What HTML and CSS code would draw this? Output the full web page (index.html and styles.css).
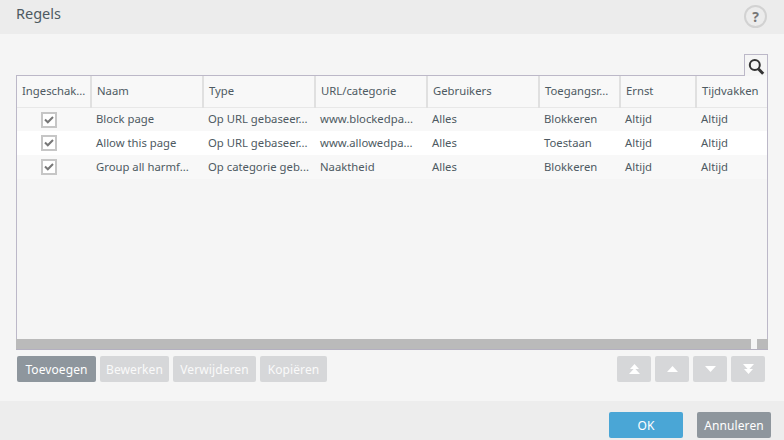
FILE: index.html
```html
<!DOCTYPE html>
<html lang="nl">
<head>
    <meta charset="UTF-8">
    <meta name="viewport" content="width=device-width, initial-scale=1.0">
    <title>Regels</title>
    <link rel="stylesheet" href="styles.css">
</head>
<body>
    <header class="top-bar">
        <h1 class="title">Regels</h1>
        <div class="help">?</div>
    </header>

    <main class="content">
        <div class="search-row">
            <div class="search-tab">
                <svg width="17" height="18" viewBox="0 0 17 18">
                    <circle cx="6.8" cy="7" r="5" fill="none" stroke="#333" stroke-width="2"/>
                    <path d="M10.5 11 L15.2 15.8" stroke="#333" stroke-width="3"/>
                </svg>
            </div>
        </div>

        <div class="grid-box">
            <table class="rules">
                <thead>
                    <tr>
                        <th class="col-on">Ingeschak...</th>
                        <th class="col-name">Naam</th>
                        <th class="col-type">Type</th>
                        <th class="col-url">URL/categorie</th>
                        <th class="col-users">Gebruikers</th>
                        <th class="col-access">Toegangsr...</th>
                        <th class="col-level">Ernst</th>
                        <th class="col-time">Tijdvakken</th>
                    </tr>
                </thead>
                <tbody>
                    <tr>
                        <td class="check-cell"><span class="check"><svg width="10" height="8" viewBox="0 0 10 8"><path d="M1 3.5 L3.8 6.3 L9 1" fill="none" stroke="#777" stroke-width="2"/></svg></span></td>
                        <td>Block page</td>
                        <td>Op URL gebaseer...</td>
                        <td>www.blockedpa...</td>
                        <td>Alles</td>
                        <td>Blokkeren</td>
                        <td>Altijd</td>
                        <td>Altijd</td>
                    </tr>
                    <tr>
                        <td class="check-cell"><span class="check"><svg width="10" height="8" viewBox="0 0 10 8"><path d="M1 3.5 L3.8 6.3 L9 1" fill="none" stroke="#777" stroke-width="2"/></svg></span></td>
                        <td>Allow this page</td>
                        <td>Op URL gebaseer...</td>
                        <td>www.allowedpa...</td>
                        <td>Alles</td>
                        <td>Toestaan</td>
                        <td>Altijd</td>
                        <td>Altijd</td>
                    </tr>
                    <tr>
                        <td class="check-cell"><span class="check"><svg width="10" height="8" viewBox="0 0 10 8"><path d="M1 3.5 L3.8 6.3 L9 1" fill="none" stroke="#777" stroke-width="2"/></svg></span></td>
                        <td>Group all harmf...</td>
                        <td>Op categorie geb...</td>
                        <td>Naaktheid</td>
                        <td>Alles</td>
                        <td>Blokkeren</td>
                        <td>Altijd</td>
                        <td>Altijd</td>
                    </tr>
                </tbody>
            </table>
            <div class="scrollbar"><div class="thumb"></div></div>
        </div>

        <div class="toolbar">
            <div class="btn-group">
                <button class="btn btn-add">Toevoegen</button>
                <button class="btn btn-off btn-edit">Bewerken</button>
                <button class="btn btn-off btn-remove">Verwijderen</button>
                <button class="btn btn-off btn-copy">Kopiëren</button>
            </div>
            <div class="btn-group">
                <button class="btn btn-off btn-move"><svg width="11" height="10" viewBox="0 0 11 10"><path d="M5.5 0 L10 5 H1 Z M5.5 4 L11 10 H0 Z" fill="#fff"/></svg></button>
                <button class="btn btn-off btn-move"><svg width="11" height="6" viewBox="0 0 11 6"><path d="M5.5 0 L11 6 H0 Z" fill="#fff"/></svg></button>
                <button class="btn btn-off btn-move"><svg width="11" height="6" viewBox="0 0 11 6"><path d="M0 0 H11 L5.5 6 Z" fill="#fff"/></svg></button>
                <button class="btn btn-off btn-move"><svg width="11" height="10" viewBox="0 0 11 10"><path d="M0 0 H11 L5.5 6 Z M1 5 H10 L5.5 10 Z" fill="#fff"/></svg></button>
            </div>
        </div>
    </main>

    <footer class="bottom-bar">
        <button class="btn btn-ok">OK</button>
        <button class="btn btn-cancel">Annuleren</button>
    </footer>
</body>
</html>
```

FILE: styles.css
```css
* {
    box-sizing: border-box;
}

body {
    display: flex;
    flex-direction: column;
    height: 100vh;
    margin: 0;
    overflow: hidden;
    font-family: "Noto Sans", "Open Sans", sans-serif;
    font-size: 11.3px;
    color: #444;
    background: #f5f5f5;
}

.top-bar {
    display: flex;
    align-items: center;
    justify-content: space-between;
    height: 34px;
    padding: 0 17px 8px 16px;
    background: #ececec;
}

.title {
    margin: 0;
    font-size: 14.5px;
    font-weight: normal;
    color: #4e5a62;
}

.help {
    width: 23px;
    height: 23px;
    margin-top: 6px;
    border: 2px solid #d2d2d2;
    border-radius: 50%;
    font-size: 14px;
    font-weight: bold;
    line-height: 19px;
    text-align: center;
    color: #777;
}

.content {
    flex: 1;
    display: flex;
    flex-direction: column;
    padding: 20px 16px 0;
}

.search-row {
    display: flex;
    justify-content: flex-end;
}

.search-tab {
    position: relative;
    z-index: 1;
    width: 24px;
    height: 22px;
    margin-bottom: -1px;
    padding: 3px 0 0 3px;
    border: 1px solid #bcb8c8;
    border-bottom: none;
    background: #f5f5f5;
}

.grid-box {
    display: flex;
    flex-direction: column;
    justify-content: space-between;
    height: 275px;
    border: 1px solid #bcb8c8;
    border-bottom: none;
}

.rules {
    width: 750px;
    table-layout: fixed;
    border-collapse: collapse;
}

.rules th {
    height: 31px;
    padding: 0 0 1px 5px;
    border-right: 2px solid #e0e0e0;
    border-bottom: 1px solid #e8e8e8;
    background: #f8f8f8;
    font-weight: normal;
    text-align: left;
    color: #4e5a62;
    white-space: nowrap;
    overflow: hidden;
}

.rules th:last-child {
    border-right: none;
}

.rules td {
    height: 24px;
    padding: 0 0 1px 5px;
    white-space: nowrap;
    overflow: hidden;
    color: #4e5a62;
}

.rules tbody tr:nth-child(odd) {
    background: #f8f8f8;
}

.rules tbody tr:nth-child(even) {
    background: #fff;
}

.col-on { width: 74px; }
.col-name { width: 112px; }
.col-type { width: 112px; }
.col-url { width: 112px; }
.col-users { width: 112px; }
.col-access { width: 81px; }
.col-level { width: 76px; }

.rules td.check-cell {
    padding: 0 0 0 24px;
}

.check {
    display: inline-flex;
    align-items: center;
    justify-content: center;
    width: 16px;
    height: 16px;
    border: 2px solid #c6c6c6;
    background: #fff;
    vertical-align: middle;
}

.scrollbar {
    display: flex;
    justify-content: flex-end;
    height: 11px;
    margin: 0 -1px;
    padding-right: 11px;
    background: #bababa;
    border-bottom: 1px solid #b4b0c0;
}

.thumb {
    width: 6px;
    background: #f5f5f5;
}

.toolbar {
    display: flex;
    justify-content: space-between;
    margin-top: 6px;
    padding: 0 3px 0 1px;
}

.btn-group {
    display: flex;
    gap: 4px;
}

.btn {
    height: 26px;
    padding: 0;
    border: none;
    border-radius: 2px;
    font-family: "Noto Sans", "Open Sans", sans-serif;
    font-size: 12px;
    letter-spacing: 0.1px;
    color: #fff;
}

.btn-add { width: 79px; background: #8e969d; }
.btn-off { background: #d6d7d9; color: #fafafa; }
.btn-edit { width: 69px; }
.btn-remove { width: 83px; }
.btn-copy { width: 67px; }
.btn-move {
    display: flex;
    align-items: center;
    justify-content: center;
    width: 34px;
}

.bottom-bar {
    display: flex;
    justify-content: flex-end;
    gap: 14px;
    height: 39px;
    padding: 11px 13px 0 0;
    background: #ededed;
}

.btn-ok { width: 74px; background: #4aa6d6; }
.btn-cancel { width: 74px; background: #8e969d; }
```
